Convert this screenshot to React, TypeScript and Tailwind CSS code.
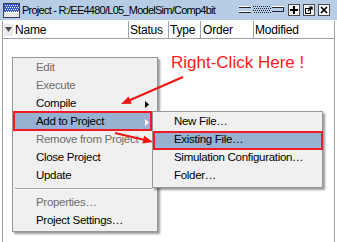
import React from "react";

const font = { fontFamily: '"Liberation Sans", Arial, sans-serif' };

const ProjectIcon = () => (
  <svg width="17" height="15" viewBox="0 0 17 15" className="shrink-0">
    <rect x="0.5" y="0.5" width="16" height="14" fill="#ffffff" stroke="#3b3b5a" />
    <rect x="1" y="1" width="15" height="8" fill="#3a5bd0" />
    {[2, 4, 6, 8, 10, 12, 14].map((x) =>
      [2, 4, 6, 8].map((y) => (
        <rect key={x + "-" + y} x={x + (y % 4 === 0 ? 1 : 0)} y={y} width="1" height="1" fill="#dfe8ff" />
      ))
    )}
    <rect x="1" y="10" width="15" height="4" fill="#e8e8e8" />
  </svg>
);

const Grip = () => (
  <svg width="46" height="10" viewBox="0 0 46 10" className="shrink-0">
    <rect x="0" y="1" width="12" height="1" fill="#ffffff" />
    <rect x="0" y="2" width="12" height="1" fill="#223" />
    <rect x="0" y="6" width="12" height="1" fill="#ffffff" />
    <rect x="0" y="7" width="12" height="1" fill="#223" />
    {[14, 16, 18, 20, 22, 24, 26, 28, 30].map((x) =>
      [1, 3, 5, 7].map((y) => (
        <rect key={x + "-" + y} x={x + (y % 4 === 3 ? 1 : 0)} y={y} width="1" height="1" fill="#223" />
      ))
    )}
    <rect x="33" y="1" width="12" height="1" fill="#ffffff" />
    <rect x="33" y="2" width="12" height="1" fill="#223" />
    <rect x="33" y="6" width="12" height="1" fill="#223" />
    <rect x="44" y="2" width="1" height="5" fill="#223" />
  </svg>
);

const TitleButton = ({ children }: { children: React.ReactNode }) => (
  <div className="w-[12px] h-[12px] border border-[#4a4a4a] bg-[#f4f4f4] flex items-center justify-center shrink-0">
    {children}
  </div>
);

interface ItemProps {
  label: string;
  disabled?: boolean;
  active?: boolean;
  arrow?: boolean;
  pad: string;
}

const MenuItem = ({ label, disabled, active, arrow, pad }: ItemProps) => (
  <div
    className={
      "h-[18px] flex items-center relative tracking-[-0.3px] " +
      pad +
      (active ? " bg-[#97b1d3]" : "") +
      (disabled ? " text-[#6d6d6d]" : " text-black")
    }
  >
    <span className="whitespace-nowrap">{label}</span>
    {arrow && (
      <svg width="4" height="7" viewBox="0 0 4 7" className="absolute left-[132px] top-[6px]">
        <polygon points="0,0 4,3.5 0,7" fill={active ? "#ffffff" : "#000000"} />
      </svg>
    )}
  </div>
);

export default function App() {
  return (
    <div className="relative w-[337px] h-[242px] bg-white overflow-hidden text-[11.5px]" style={font}>
      {/* title bar */}
      <div className="h-[20px] bg-[#b7cde6] flex items-center pl-[3px]">
        <ProjectIcon />
        <span className="ml-[2px] text-[11px] tracking-[-0.75px] text-black whitespace-nowrap leading-none mt-[1px] shrink-0">
          Project - R:/EE4480/L05_ModelSim/Comp4bit
        </span>
        <div className="ml-auto flex items-center gap-[3px] pr-[7px]">
          <Grip />
          <TitleButton>
            <svg width="8" height="8" viewBox="0 0 8 8">
              <rect x="3" y="0" width="2" height="8" fill="#000" />
              <rect x="0" y="3" width="8" height="2" fill="#000" />
            </svg>
          </TitleButton>
          <TitleButton>
            <svg width="8" height="8" viewBox="0 0 8 8">
              <rect x="0.5" y="2.5" width="5" height="5" fill="none" stroke="#000" />
              <path d="M3 5 L7 1 M4 1 H7 V4" stroke="#000" strokeWidth="1.2" fill="none" />
            </svg>
          </TitleButton>
          <TitleButton>
            <svg width="8" height="8" viewBox="0 0 8 8">
              <path d="M1 1 L7 7 M7 1 L1 7" stroke="#000" strokeWidth="1.6" />
            </svg>
          </TitleButton>
        </div>
      </div>

      {/* project pane */}
      <div className="ml-[2px] w-[333px] h-[222px] border-x border-[#a0a0a0] bg-white">
        <div className="h-[18px] flex border-b border-[#a0a0a0] mt-[1px] text-[12px] tracking-[-0.2px] text-black">
          <div className="w-[126px] border-r border-[#a0a0a0] flex items-center">
            <div className="w-[9px] h-[12px] ml-[1px] bg-[#e9e9e9] flex items-center justify-center">
              <svg width="7" height="5" viewBox="0 0 7 5">
                <polygon points="0,0 7,0 3.5,5" fill="#505050" />
              </svg>
            </div>
            <span className="ml-[2px]">Name</span>
          </div>
          <div className="w-[40px] border-r border-[#a0a0a0] flex items-center pl-[1px]">Status</div>
          <div className="w-[32px] border-r border-[#a0a0a0] flex items-center pl-[1px]">Type</div>
          <div className="w-[53px] border-r border-[#a0a0a0] flex items-center pl-[2px]">Order</div>
          <div className="flex-1 flex items-center pl-[1px]">Modified</div>
        </div>
      </div>

      {/* context menu */}
      <div className="absolute left-[12px] top-[57px] w-[146px] bg-[#f0f0f0] border border-[#979797] pt-[1px] pb-[1px] shadow-[2px_2px_2px_rgba(0,0,0,0.4)]">
        <MenuItem pad="pl-[23px]" label="Edit" disabled />
        <MenuItem pad="pl-[23px]" label="Execute" disabled />
        <MenuItem pad="pl-[23px]" label="Compile" arrow />
        <MenuItem pad="pl-[23px]" label="Add to Project" arrow active />
        <MenuItem pad="pl-[23px]" label="Remove from Project" disabled />
        <MenuItem pad="pl-[23px]" label="Close Project" />
        <MenuItem pad="pl-[23px]" label="Update" />
        <div className="h-[9px] pt-[3px] pl-[2px] pr-[5px]">
          <div className="h-[1px] bg-[#a0a0a0]" />
          <div className="h-[1px] bg-white" />
        </div>
        <MenuItem pad="pl-[23px]" label="Properties…" disabled />
        <MenuItem pad="pl-[23px]" label="Project Settings…" />
      </div>

      {/* submenu */}
      <div className="absolute left-[152px] top-[111px] w-[171px] bg-[#f0f0f0] border border-[#979797] pt-[1px] pb-[2px] shadow-[2px_2px_2px_rgba(0,0,0,0.4)]">
        <MenuItem pad="pl-[21px]" label="New File…" />
        <MenuItem pad="pl-[21px]" label="Existing File…" active />
        <MenuItem pad="pl-[21px]" label="Simulation Configuration…" />
        <MenuItem pad="pl-[21px]" label="Folder…" />
      </div>

      {/* annotations */}
      <div className="absolute left-[13px] top-[111px] w-[139px] h-[20px] border-2 border-[#ee1c24]" />
      <div className="absolute left-[153px] top-[131px] w-[170px] h-[19px] border-2 border-[#ee1c24]" />
      <div className="absolute left-[171px] top-[54px] text-[17px] text-[#ff1a1a] whitespace-nowrap leading-none">
        Right-Click Here !
      </div>
      <svg className="absolute left-0 top-0 pointer-events-none" width="337" height="242" viewBox="0 0 337 242">
        <line x1="183" y1="77" x2="129" y2="100.5" stroke="#f01414" strokeWidth="2" />
        <polygon points="121,104 131.8,103.7 128.6,96.4" fill="#f01414" />
        <line x1="115" y1="133" x2="145" y2="140" stroke="#f01414" strokeWidth="2" />
        <polygon points="153,142 142.4,143.6 144.2,135.8" fill="#f01414" />
      </svg>
    </div>
  );
}
